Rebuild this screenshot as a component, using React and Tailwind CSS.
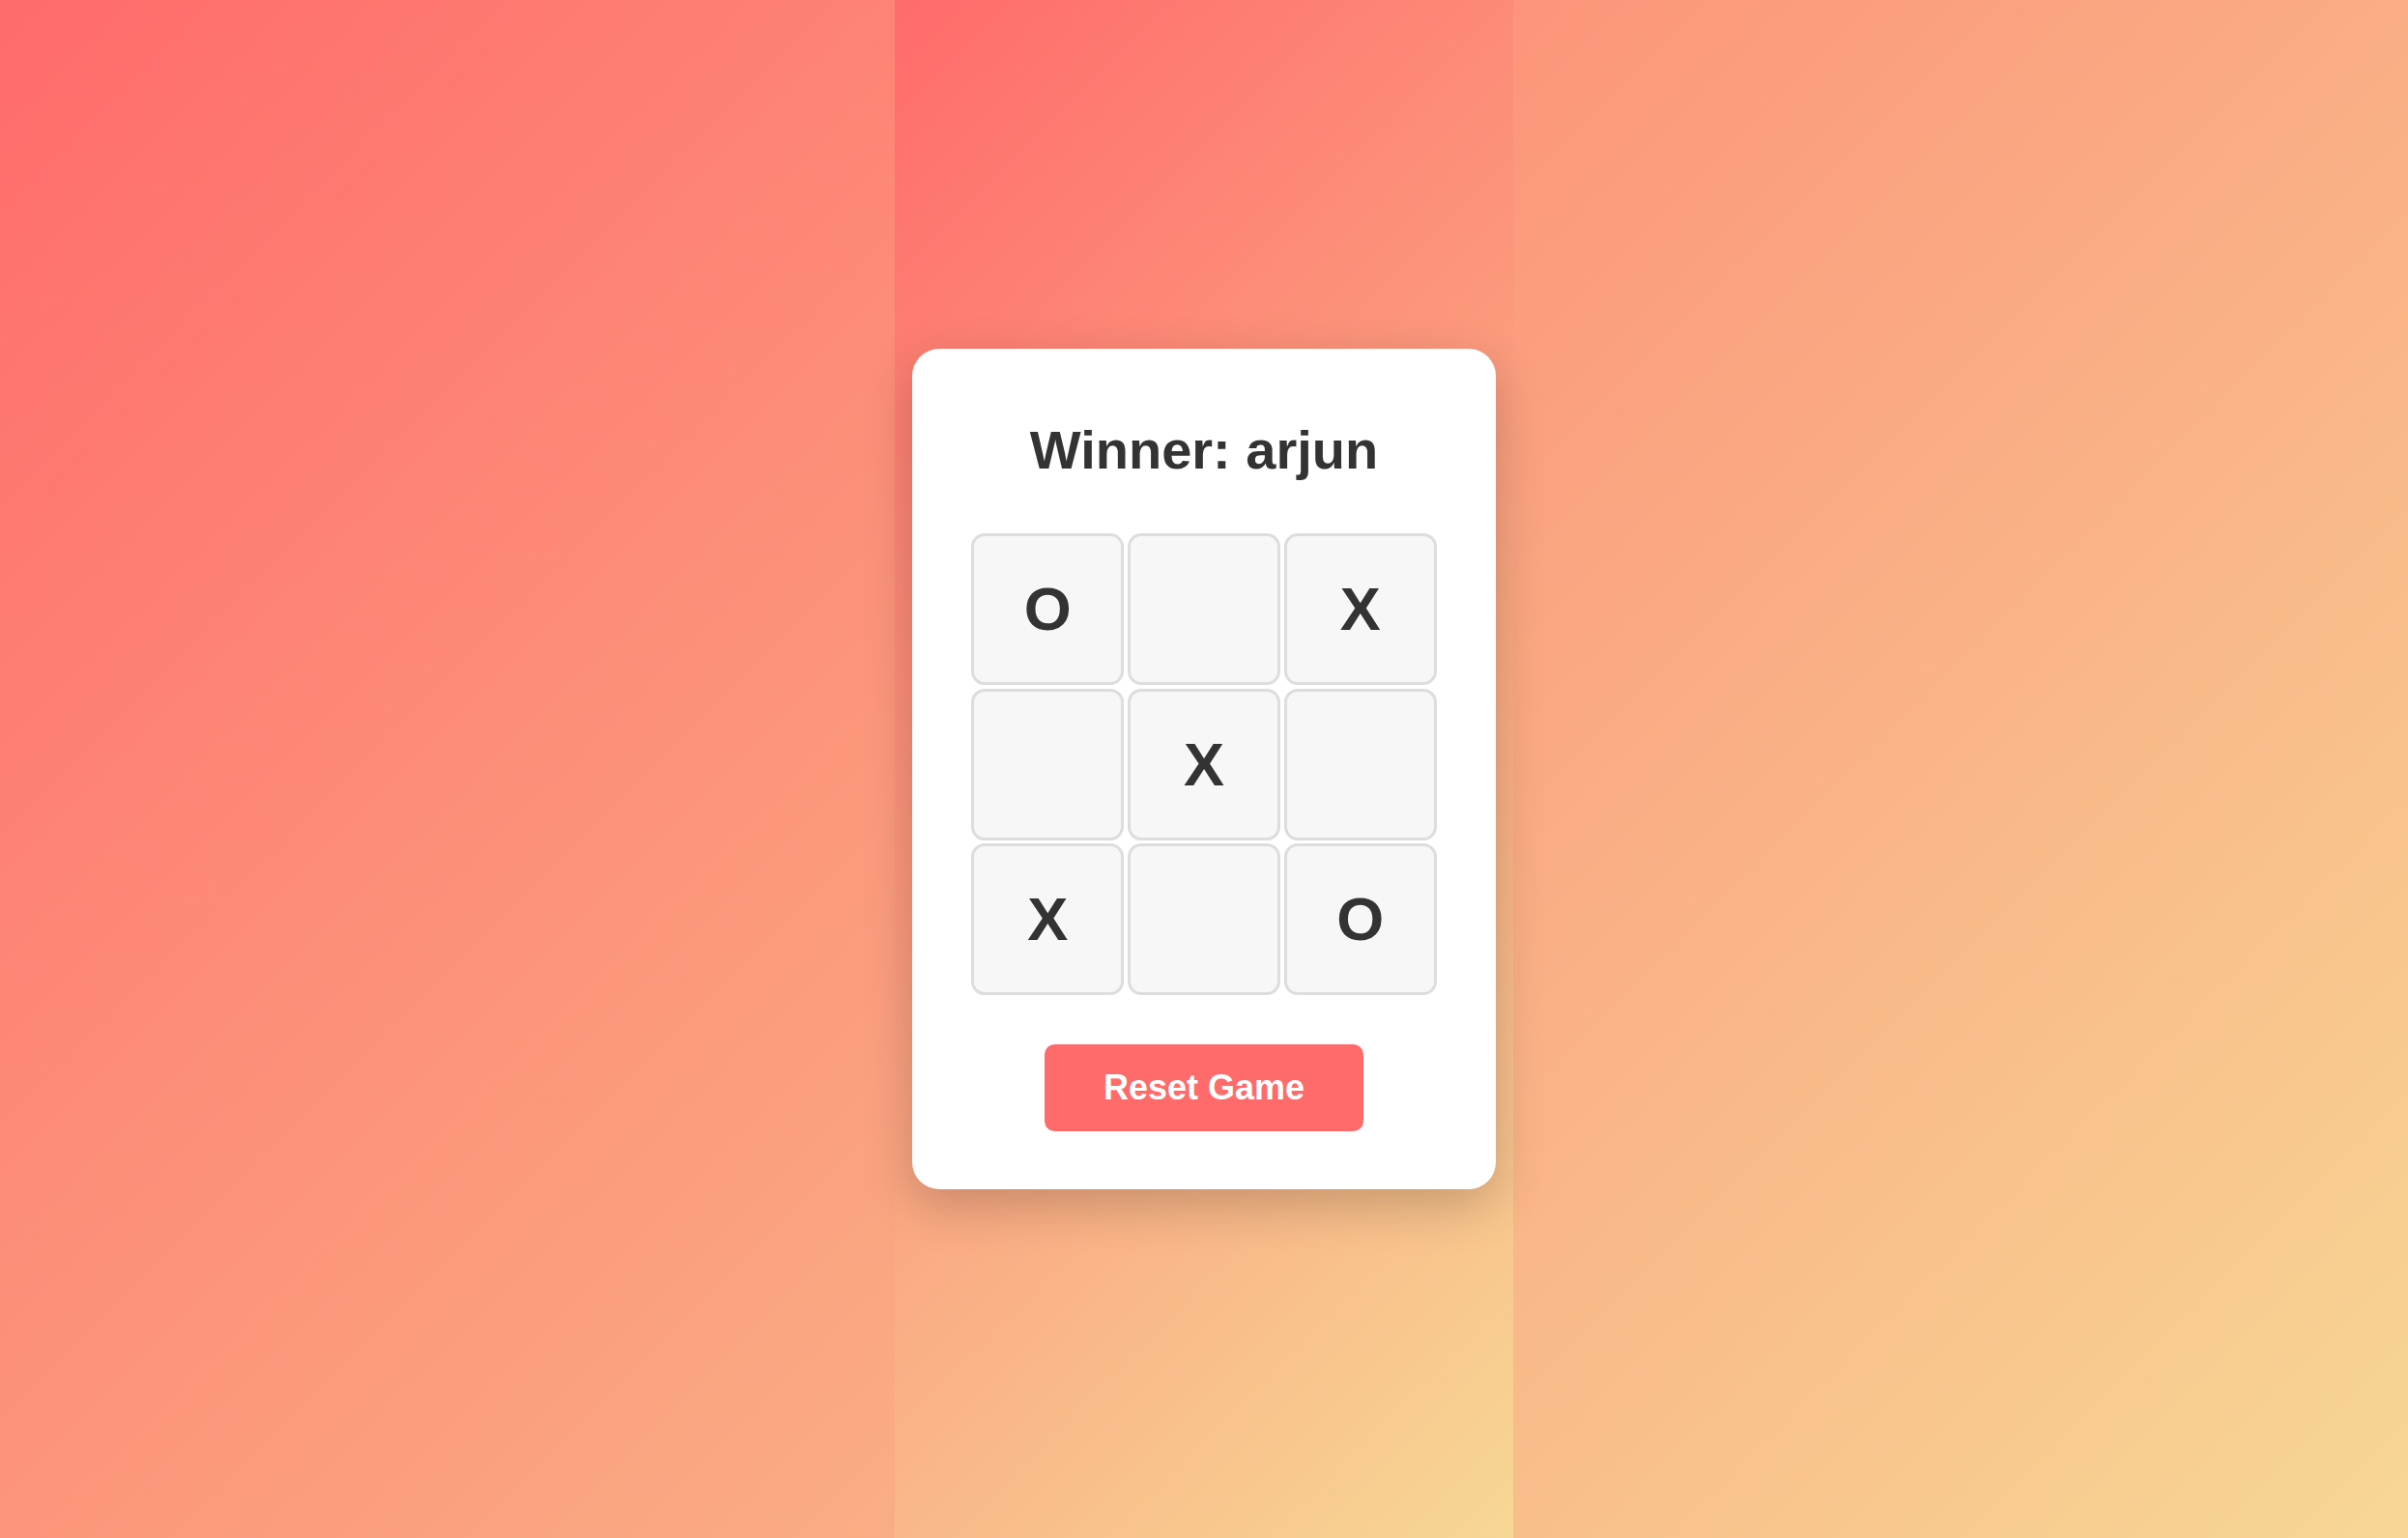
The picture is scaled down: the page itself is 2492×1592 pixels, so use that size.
import React from "react";

const board = ["O", "", "X", "", "X", "", "X", "", "O"];

export default function App() {
  return (
    <div
      className="w-full h-screen flex justify-center bg-[linear-gradient(135deg,#ff6b6b,#f7d794)]"
      style={{ fontFamily: '"Liberation Sans", Arial, sans-serif' }}
    >
      <div className="w-[640px] h-full flex items-center justify-center bg-[linear-gradient(135deg,#ff6b6b,#f7d794)]">
        <div className="w-[604px] bg-white rounded-[28px] shadow-[0_17px_52px_rgba(0,0,0,0.2)] pt-[73px] pb-[60px] px-[61px] flex flex-col items-center">
          <h1 className="text-[56px] leading-[64px] font-bold text-[#333]">Winner: arjun</h1>
          <div className="mt-[54px] w-[482px] grid grid-cols-3 gap-[3.5px]">
            {board.map((v, i) => (
              <div
                key={i}
                className="h-[157px] bg-[#f7f7f7] border-[3.5px] border-[#ddd] rounded-[14px] flex items-center justify-center text-[63px] font-bold text-[#333]"
              >
                {v}
              </div>
            ))}
          </div>
          <button className="mt-[51px] h-[90px] px-[61px] bg-[#ff6b6b] text-white text-[36px] font-bold rounded-[10.5px]">
            Reset Game
          </button>
        </div>
      </div>
    </div>
  );
}
